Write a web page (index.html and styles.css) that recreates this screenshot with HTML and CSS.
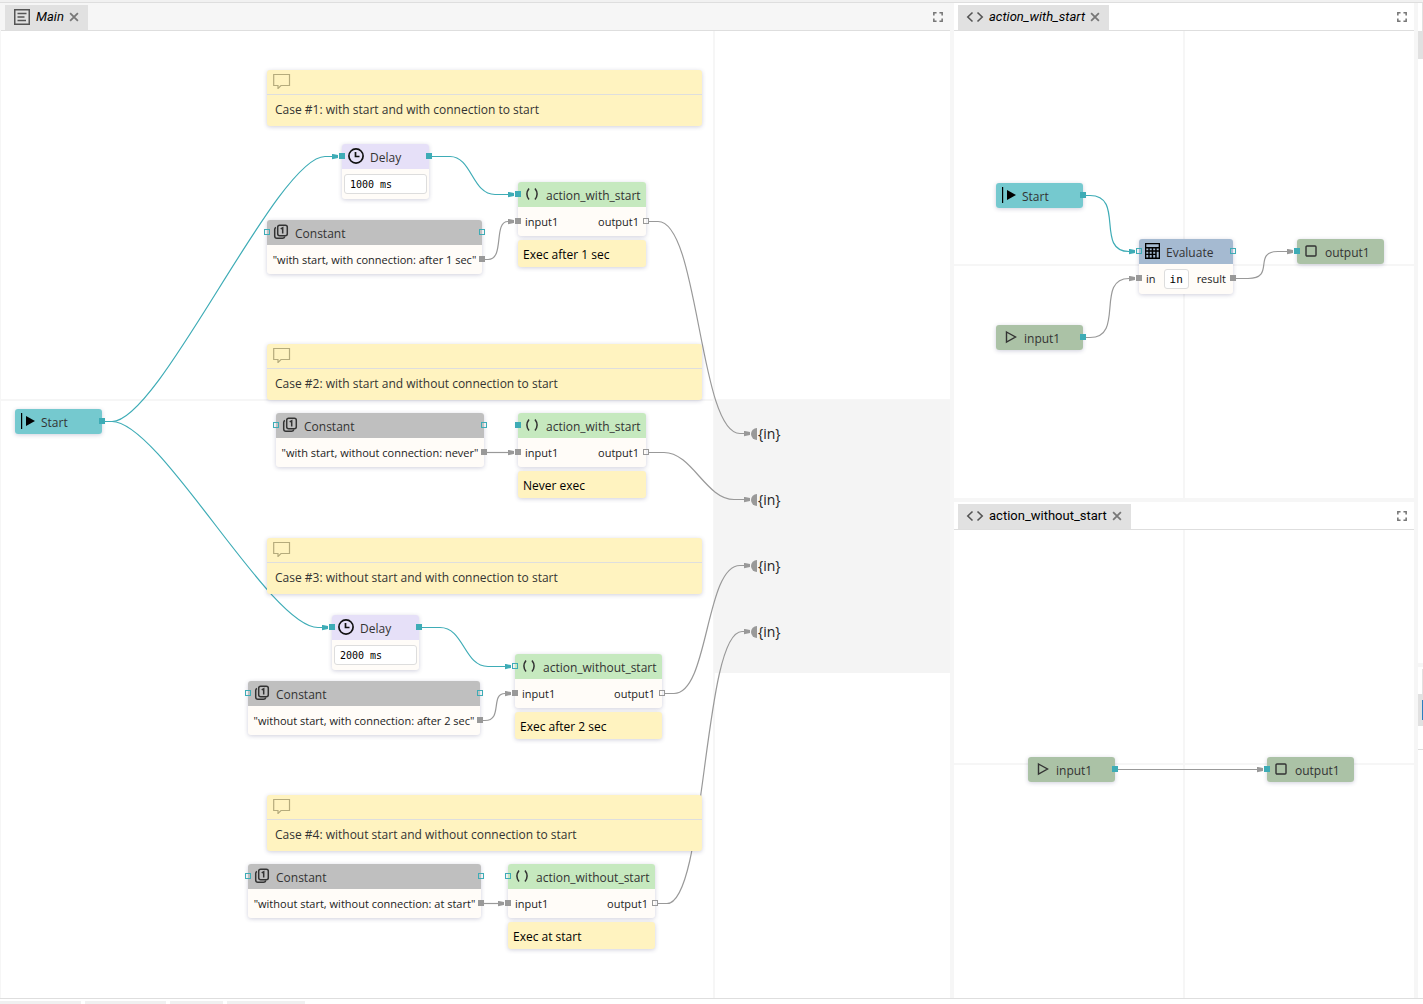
FILE: index.html
```html
<!DOCTYPE html>
<html lang="en">
<head>
<meta charset="utf-8">
<title>Main</title>
<link rel="stylesheet" href="styles.css">
</head>
<body>
<svg class="sprite" aria-hidden="true">
  <defs>
    <marker id="arrow-teal" viewBox="0 0 8 6" markerWidth="8" markerHeight="6" refX="0" refY="3" markerUnits="userSpaceOnUse"><path class="fill-teal" d="M0 0.300L6 1.600V4.400L0 5.700Z"/></marker>
    <marker id="arrow-gray" viewBox="0 0 8 6" markerWidth="8" markerHeight="6" refX="0" refY="3" markerUnits="userSpaceOnUse"><path class="fill-gray" d="M0 0.300L6 1.600V4.400L0 5.700Z"/></marker>
    <symbol id="i-page" viewBox="0 0 18 18"><path d="M1.750 1.750H16.250V16.250H1.750Z" fill="none" stroke="#555" stroke-width="1.500"/><path d="M4.500 5.500H13.500M4.500 9H11.500M4.500 12.500H13" stroke="#555" stroke-width="1.400"/></symbol>
    <symbol id="i-code" viewBox="0 0 18 18"><path d="M6.500 4.500L1.800 9L6.500 13.500M11.500 4.500L16.200 9L11.500 13.500" fill="none" stroke="#555" stroke-width="1.600"/></symbol>
    <symbol id="i-close" viewBox="0 0 9 9"><path d="M1 1L8 8M8 1L1 8" stroke="#777" stroke-width="1.600"/></symbol>
    <symbol id="i-full" viewBox="0 0 9 9"><path d="M0.750 3.200V0.750H3.200M5.800 0.750H8.250V3.200M8.250 5.800V8.250H5.800M3.200 8.250H0.750V5.800" fill="none" stroke="#777" stroke-width="1.400"/></symbol>
    <symbol id="i-comment" viewBox="0 0 18 16"><path d="M0.700 1.500H16.500V12.500H8L5 15.500V12.500H0.700Z" fill="none" stroke="#b5ab7c" stroke-width="1.200"/></symbol>
    <symbol id="i-clock" viewBox="0 0 16 16"><circle cx="8" cy="8" r="7.100" fill="none" stroke="#111" stroke-width="1.700"/><path d="M7.500 4V8.500H11.500" fill="none" stroke="#111" stroke-width="1.700"/></symbol>
    <symbol id="i-const" viewBox="0 0 16 16"><rect x="4.700" y="1.200" width="9.600" height="10.600" rx="2" fill="none" stroke="#333" stroke-width="1.500"/><path d="M3 3.500Q1.700 3.800 1.700 5.500V12Q1.700 14.300 4 14.300H9.500Q11.300 14.300 11.800 12.500M7.700 4.800L9.700 3.800V9.500" fill="none" stroke="#333" stroke-width="1.500"/></symbol>
    <symbol id="i-call" viewBox="0 0 16 16"><path d="M5 2.500Q0.800 8 5 13.500M11 2.500Q15.200 8 11 13.500" fill="none" stroke="#333" stroke-width="1.500"/></symbol>
    <symbol id="i-start" viewBox="0 0 16 16"><path d="M0 0H1.200V16H0Z"/><path d="M5 3L14 8L5 13Z"/></symbol>
    <symbol id="i-in" viewBox="0 0 16 16"><path d="M4.500 3L13.500 8L4.500 13Z" fill="none" stroke="#333" stroke-width="1.400"/></symbol>
    <symbol id="i-out" viewBox="0 0 16 16"><rect x="3" y="3" width="10" height="10" rx="1" fill="none" stroke="#333" stroke-width="1.400"/></symbol>
    <symbol id="i-calc" viewBox="0 0 16 16"><path fill-rule="evenodd" d="M0 0H15V16H0ZM1.300 1.300V4H13.700V1.300ZM1.300 5.500V7.300H3.300V5.500ZM4.700 5.500V7.300H6.700V5.500ZM8.200 5.500V7.300H10.200V5.500ZM11.700 5.500V7.300H13.700V5.500ZM1.300 8.700V10.700H3.300V8.700ZM4.700 8.700V10.700H6.700V8.700ZM8.200 8.700V10.700H10.200V8.700ZM11.700 8.700V14.500H13.700V8.700ZM1.300 12V14.500H3.300V12ZM4.700 12V14.500H6.700V12ZM8.200 12V14.500H10.200V12Z"/></symbol>
  </defs>
</svg>

<div class="topbar"></div>
<main class="workbench">
  <section class="panel panel-main">
    <header class="tabbar tabbar-active">
      <div class="tab"><svg class="tab-icon"><use href="#i-page"/></svg><span class="preview">Main</span><button class="icon-btn" aria-label="Close Main"><svg><use href="#i-close"/></svg></button></div>
      <button class="icon-btn" aria-label="Maximize"><svg><use href="#i-full"/></svg></button>
    </header>
    <div class="canvas canvas-main">
      <div class="region"></div>
      <svg class="links" aria-hidden="true">
        <g transform="translate(-1 -31)">
          <g class="link-teal">
            <path d="M105 421.500H112C160 421.500 277 156.500 325 156.500H332"/>
            <path d="M105 421.500H112C160 421.500 270 627.500 318 627.500H322"/>
            <path d="M432 156.500H450C472 156.500 472 194.500 495 194.500H508"/>
            <path d="M422 627.500H440C464 627.500 464 666.500 488 666.500H505"/>
          </g>
          <g class="link-gray">
            <path d="M485 259.500H488C505 259.500 493 221.500 508 221.500"/>
            <path d="M487 452.500H508"/>
            <path d="M483 720.500H485C503 720.500 490 693.500 505 693.500"/>
            <path d="M484 903.500H498"/>
            <path d="M649 221.500H658C699 221.500 699 433.500 740 433.500H744"/>
            <path d="M649 452.500H664C692 452.500 706 499.500 734 499.500H744"/>
            <path d="M665 693.500H674C709 693.500 705 565.500 740 565.500H744"/>
            <path d="M658 903.500H667C706 903.500 703 631.500 742 631.500H744"/>
          </g>
        </g>
      </svg>

      <article class="comment case-1"><div class="comment-head"><svg><use href="#i-comment"/></svg></div><p>Case #1: with start and with connection to start</p></article>
      <article class="comment case-2"><div class="comment-head"><svg><use href="#i-comment"/></svg></div><p>Case #2: with start and without connection to start</p></article>
      <article class="comment case-3"><div class="comment-head"><svg><use href="#i-comment"/></svg></div><p>Case #3: without start and with connection to start</p></article>
      <article class="comment case-4"><div class="comment-head"><svg><use href="#i-comment"/></svg></div><p>Case #4: without start and without connection to start</p></article>

      <div class="node start main-start"><div class="head"><svg><use href="#i-start"/></svg>Start</div><i class="port right full"></i></div>

      <div class="node delay delay-1"><div class="head"><svg><use href="#i-clock"/></svg>Delay</div><div class="body"><input type="text" value="1000 ms" aria-label="Delay"></div><i class="port left full"></i><i class="port right full"></i></div>
      <div class="node delay delay-2"><div class="head"><svg><use href="#i-clock"/></svg>Delay</div><div class="body"><input type="text" value="2000 ms" aria-label="Delay"></div><i class="port left full"></i><i class="port right full"></i></div>

      <div class="node constant const-1"><div class="head"><svg><use href="#i-const"/></svg>Constant</div><div class="body">"with start, with connection: after 1 sec"</div><i class="port left"></i><i class="port right"></i><i class="port right data full"></i></div>
      <div class="node constant const-2"><div class="head"><svg><use href="#i-const"/></svg>Constant</div><div class="body">"with start, without connection: never"</div><i class="port left"></i><i class="port right"></i><i class="port right data full"></i></div>
      <div class="node constant const-3"><div class="head"><svg><use href="#i-const"/></svg>Constant</div><div class="body">"without start, with connection: after 2 sec"</div><i class="port left"></i><i class="port right"></i><i class="port right data full"></i></div>
      <div class="node constant const-4"><div class="head"><svg><use href="#i-const"/></svg>Constant</div><div class="body">"without start, without connection: at start"</div><i class="port left"></i><i class="port right"></i><i class="port right data full"></i></div>

      <div class="node action action-1"><div class="head"><svg><use href="#i-call"/></svg>action_with_start</div><div class="body"><span>input1</span><span>output1</span></div><i class="port left full"></i><i class="port left data full"></i><i class="port right data"></i><p class="remark">Exec after 1 sec</p></div>
      <div class="node action action-2"><div class="head"><svg><use href="#i-call"/></svg>action_with_start</div><div class="body"><span>input1</span><span>output1</span></div><i class="port left full"></i><i class="port left data full"></i><i class="port right data"></i><p class="remark">Never exec</p></div>
      <div class="node action action-3"><div class="head"><svg><use href="#i-call"/></svg>action_without_start</div><div class="body"><span>input1</span><span>output1</span></div><i class="port left"></i><i class="port left data full"></i><i class="port right data"></i><p class="remark">Exec after 2 sec</p></div>
      <div class="node action action-4"><div class="head"><svg><use href="#i-call"/></svg>action_without_start</div><div class="body"><span>input1</span><span>output1</span></div><i class="port left"></i><i class="port left data full"></i><i class="port right data"></i><p class="remark">Exec at start</p></div>

      <div class="sink sink-1">{in}</div>
      <div class="sink sink-2">{in}</div>
      <div class="sink sink-3">{in}</div>
      <div class="sink sink-4">{in}</div>
    </div>
  </section>

  <div class="side">
    <section class="panel">
      <header class="tabbar">
        <div class="tab"><svg class="tab-icon"><use href="#i-code"/></svg><span class="preview">action_with_start</span><button class="icon-btn" aria-label="Close action_with_start"><svg><use href="#i-close"/></svg></button></div>
        <button class="icon-btn" aria-label="Maximize"><svg><use href="#i-full"/></svg></button>
      </header>
      <div class="canvas">
        <svg class="links" aria-hidden="true">
          <g transform="translate(-954 -31)">
            <path class="link-teal" d="M1086 195.500H1090C1125 195.500 1095 251.500 1129 251.500"/>
            <g class="link-gray">
              <path d="M1086 337.500H1090C1125 337.500 1095 278.500 1129 278.500"/>
              <path d="M1236 278.500H1248C1276 278.500 1252 251.500 1278 251.500H1287"/>
            </g>
          </g>
        </svg>
        <div class="node start with-start"><div class="head"><svg><use href="#i-start"/></svg>Start</div><i class="port right full"></i></div>
        <div class="node io with-input"><div class="head"><svg><use href="#i-in"/></svg>input1</div><i class="port right full"></i></div>
        <div class="node evaluate with-eval"><div class="head"><svg><use href="#i-calc"/></svg>Evaluate</div><div class="body"><label for="expr">in</label><input id="expr" type="text" value="in"><span>result</span></div><i class="port left"></i><i class="port right"></i><i class="port left data full"></i><i class="port right data full"></i></div>
        <div class="node io with-output"><div class="head"><svg><use href="#i-out"/></svg>output1</div><i class="port left full"></i></div>
      </div>
    </section>
    <section class="panel">
      <header class="tabbar">
        <div class="tab"><svg class="tab-icon"><use href="#i-code"/></svg><span>action_without_start</span><button class="icon-btn" aria-label="Close action_without_start"><svg><use href="#i-close"/></svg></button></div>
        <button class="icon-btn" aria-label="Maximize"><svg><use href="#i-full"/></svg></button>
      </header>
      <div class="canvas">
        <svg class="links" aria-hidden="true">
          <g transform="translate(-954 -530)"><path class="link-gray" d="M1118 769.500H1257"/></g>
        </svg>
        <div class="node io without-input"><div class="head"><svg><use href="#i-in"/></svg>input1</div><i class="port right full"></i></div>
        <div class="node io without-output"><div class="head"><svg><use href="#i-out"/></svg>output1</div><i class="port left full"></i></div>
      </div>
    </section>
  </div>

  <aside class="drawer">
    <div class="drawer-top"><div class="drawer-tab"></div><div class="drawer-item"></div></div>
    <div class="drawer-bottom"><div class="drawer-tab"></div><div class="drawer-item selected"></div><div class="drawer-row"></div></div>
  </aside>
</main>
<footer class="taskbar"><i class="wide"></i><i class="wide"></i><i class="narrow"></i><i class="medium"></i></footer>
</body>
</html>
```
FILE: styles.css
```css
* { box-sizing: border-box; }

:root {
  --gap: #f6f6f6;
  --line: #dedede;
  --tab: #e1e1e1;
  --teal: #3eacb6;
  --gray: #999;
  --note: #fff3c0;
  --shadow: 0 1px 4px rgba(40, 40, 100, 0.22);
}

body {
  margin: 0;
  height: 100vh;
  overflow: hidden;
  display: flex;
  flex-direction: column;
  background: #fff;
  color: #333;
  font: 12px/20px "Open Sans", "Noto Sans", sans-serif;
}

p { margin: 0; }
button, input { font: inherit; margin: 0; }
.sprite { position: absolute; width: 0; height: 0; }

.topbar { flex: none; height: 3px; background: #f1f1f1; border-bottom: 1px solid var(--line); }

.workbench {
  flex: 1;
  min-height: 0;
  display: grid;
  grid-template-columns: minmax(0, 949fr) minmax(0, 460fr) 5px;
  gap: 4px;
  padding-left: 1px;
  background: var(--gap);
}

.side { display: grid; grid-template-rows: minmax(0, 495fr) minmax(0, 496fr); gap: 4px; min-height: 0; }
.panel { min-height: 0; display: flex; flex-direction: column; background: #fff; }

/* Tab bars */
.tabbar {
  flex: none;
  height: 28px;
  padding: 2px 7px 0 4px;
  display: flex;
  align-items: center;
  justify-content: space-between;
  border-bottom: 1px solid var(--line);
  background: #fff;
}
.tabbar-active { background: var(--gap); }
.tab {
  height: 25px;
  padding: 0 9px 1px 8px;
  display: flex;
  align-items: center;
  gap: 5px;
  background: var(--tab);
  color: #000;
  font: 13px/20px Roboto, sans-serif;
}
.preview { font-style: italic; }
.tab-icon { width: 18px; height: 18px; }
.icon-btn { height: 12px; padding: 0 0 2px; border: 0; background: none; display: flex; }
.tab .icon-btn { height: 10px; padding: 0; }
.icon-btn svg { width: 10px; height: 10px; }

/* Canvas and axes */
.canvas {
  flex: 1;
  min-height: 0;
  position: relative;
  overflow: hidden;
  background:
    linear-gradient(var(--gap), var(--gap)) center / 2px 100% no-repeat,
    linear-gradient(var(--gap), var(--gap)) center / 100% 2px no-repeat,
    #fff;
}
.canvas-main { background-position: 712px 0, 0 368px; }
.region { position: absolute; left: 713px; right: 0; top: 369px; height: 273px; background: #f4f4f4; }

.links { position: absolute; inset: 0; width: 100%; height: 100%; fill: none; stroke-width: 1.2; }
.link-teal { stroke: var(--teal); }
.link-gray { stroke: var(--gray); }
.link-teal path, path.link-teal { marker-end: url(#arrow-teal); }
.link-gray path, path.link-gray { marker-end: url(#arrow-gray); }
.fill-teal { fill: var(--teal); stroke: none; }
.fill-gray { fill: var(--gray); stroke: none; }

/* The arrowheads' own shapes carry no further markers */
.sprite path { marker-end: none; }

/* Comments */
.comment { position: absolute; left: 266px; width: 435px; background: var(--note); border-radius: 3px; box-shadow: var(--shadow); }
.comment-head { height: 25px; padding: 3px 6px; border-bottom: 1px solid var(--line); }
.comment-head svg { display: block; width: 18px; height: 16px; }
.comment p { padding: 5px 8px 6px; }
.case-1 { top: 39px; }
.case-2 { top: 313px; }
.case-3 { top: 507px; }
.case-4 { top: 764px; }

/* Nodes */
.node { position: absolute; border-radius: 3px; background: #fffcf8; box-shadow: var(--shadow); white-space: nowrap; }
.head { height: 25px; padding: 2px 6px 0; display: flex; align-items: center; gap: 6px; border-radius: 3px 3px 0 0; }
.head svg { flex: none; align-self: flex-start; margin-top: 2px; width: 16px; height: 16px; }
.body { height: 29px; padding: 0 7px; display: flex; align-items: center; justify-content: space-between; color: #222; font-size: 11px; }

.start .head, .io .head { border-radius: 3px; }
.start .head { background: #75c9cf; gap: 4px; }
.io .head { background: #abc2a6; }
.delay .head { background: #e6e0f8; }
.constant .head { background: #bfbfbf; }
.constant .body { padding: 0; justify-content: center; }
.action .head { background: #c6e9bf; }
.evaluate .head { background: #a5bad1; gap: 5px; }

.start, .io, .delay { width: 87px; }
.node input { height: 20px; border: 1px solid #ddd; border-radius: 3px; background: #fff; color: #000; padding: 0 5px; font: 10px/18px "DejaVu Sans Mono", monospace; }
.delay .body, .evaluate .body { height: 30px; }
.delay .body { padding: 0 2px; }
.delay input { width: 83px; }
.evaluate input { width: 25px; font-size: 11px; }
.evaluate { width: 94px; }

.remark { position: absolute; left: 0; right: 0; top: 58px; height: 27px; padding: 5px 5px 2px; border-radius: 3px; background: var(--note); box-shadow: var(--shadow); color: #000; }

.port { position: absolute; top: 9px; width: 6px; height: 6px; border: 1px solid var(--teal); }
.port.full { background: var(--teal); }
.port.left { left: -3px; }
.port.right { right: -3px; }
.port.data { top: 36px; border-color: var(--gray); }
.port.data.full { background: var(--gray); }

.sink { position: absolute; left: 750px; height: 20px; display: flex; align-items: center; gap: 1px; font-size: 14px; color: #222; }
.sink::before { content: ""; flex: none; width: 6px; height: 12px; border-radius: 6px 0 0 6px; background: var(--gray); }

/* Node placement on the free canvas */
.main-start { left: 14px; top: 378px; }
.delay-1 { left: 341px; top: 113px; }
.delay-2 { left: 331px; top: 584px; }
.const-1 { left: 266px; top: 189px; width: 215px; }
.const-2 { left: 275px; top: 382px; width: 208px; }
.const-3 { left: 247px; top: 650px; width: 232px; }
.const-4 { left: 247px; top: 833px; width: 233px; }
.action-1 { left: 517px; top: 151px; width: 128px; }
.action-2 { left: 517px; top: 382px; width: 128px; }
.action-3 { left: 514px; top: 623px; width: 147px; }
.action-4 { left: 507px; top: 833px; width: 147px; }
.sink-1 { top: 393px; }
.sink-2 { top: 459px; }
.sink-3 { top: 525px; }
.sink-4 { top: 591px; }
.with-start { left: 42px; top: 152px; }
.with-input { left: 42px; top: 294px; }
.with-eval { left: 185px; top: 208px; }
.with-output { left: 343px; top: 208px; }
.without-input { left: 74px; top: 227px; }
.without-output { left: 313px; top: 227px; }

/* Drawer at the window's right edge */
.drawer { display: grid; grid-template-rows: 660fr 331fr; gap: 4px; }
.drawer-top { background: #fff; }
.drawer-bottom { background: #fff; padding-top: 2px; }
.drawer-tab { height: 28px; border-right: 1px solid var(--tab); }
.drawer-bottom .drawer-tab { height: 25px; }
.drawer-item { height: 28px; background: var(--tab); }
.drawer-item.selected { height: 32px; padding: 6px 0 6px 4px; }
.selected::before { content: ""; display: block; height: 20px; background: #2b7fc0; }
.drawer-row { height: 24px; border-bottom: 1px solid var(--line); }

.taskbar { flex: none; height: 6px; padding-top: 2px; display: flex; gap: 4px; border-top: 1px solid var(--line); background: #fff; }
.taskbar i { background: #f0f0f0; }
.wide { width: 81px; }
.narrow { width: 53px; }
.medium { width: 78px; }
```
